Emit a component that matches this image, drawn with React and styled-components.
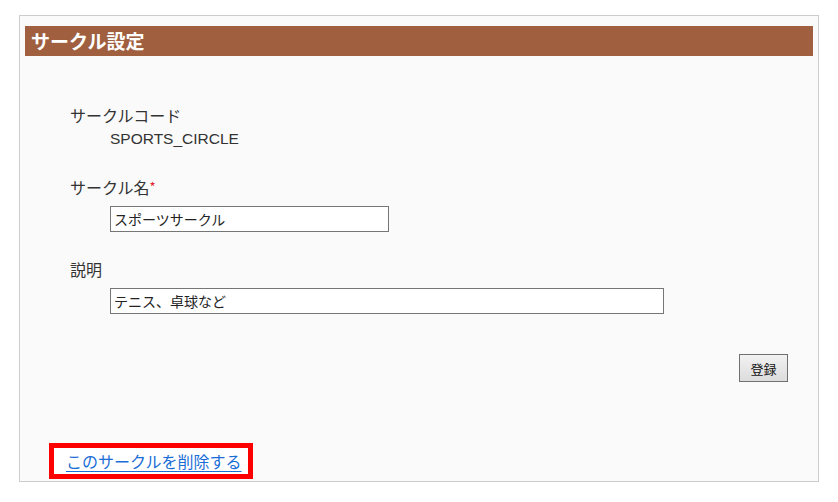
import styled, { createGlobalStyle } from 'styled-components'

const GlobalStyle = createGlobalStyle`
  body {
    margin: 0;
    background: #ffffff;
    font-family: "Noto Sans CJK JP", "Liberation Sans", sans-serif;
    color: #333333;
  }
`

const Page = styled.div`
  padding: 15px 20px 0 19px;
`

const Panel = styled.section`
  box-sizing: border-box;
  width: 800px;
  border: 1px solid #cccccc;
  background: #fafafa;
  padding: 10px 5px 2px 5px;
`

const Title = styled.h2`
  margin: 0;
  height: 30px;
  line-height: 30px;
  padding-left: 6px;
  background: #a0603f;
  color: #ffffff;
  font-size: 19px;
  font-weight: bold;
`

const Form = styled.div`
  padding: 47px 25px 0 45px;
  display: flex;
  flex-direction: column;
`

const Field = styled.div`
  display: flex;
  flex-direction: column;
  margin-bottom: ${(p) => p.gap ?? 24}px;
`

const Label = styled.div`
  font-size: 16px;
  line-height: 24px;
  height: 24px;
`

const Required = styled.span`
  color: #e8202a;
  font-size: 13px;
  line-height: 0;
  position: relative;
  top: -2px;
`

const Value = styled.div`
  margin-left: 40px;
  font-size: 15.5px;
  line-height: 24px;
  font-family: "Liberation Sans", "Noto Sans CJK JP", sans-serif;
`

const Input = styled.input`
  box-sizing: border-box;
  margin: 7px 0 0 40px;
  width: ${(p) => p.w}px;
  height: 26px;
  border: 1px solid #767676;
  background: #ffffff;
  padding: 0 3px;
  font-family: "Noto Sans CJK JP", sans-serif;
  font-size: 14px;
  color: #222222;
  outline: none;
`

const Actions = styled.div`
  display: flex;
  justify-content: flex-end;
  margin-top: 40px;
`

const SubmitButton = styled.button`
  width: 49px;
  height: 28px;
  border: 1px solid #707070;
  background: linear-gradient(#f2f2f2, #dcdcdc);
  font-family: "Noto Sans CJK JP", sans-serif;
  font-size: 13px;
  color: #111111;
  padding: 0;
`

const DeleteBox = styled.div`
  width: fit-content;
  margin: 61px 0 0 24px;
  border: 5px solid #ff0000;
  background: #ffffff;
  padding: 2px 6px 2px 12px;
  height: 22px;
  display: flex;
  align-items: center;
`

const DeleteLink = styled.a`
  color: #1a6dd6;
  font-size: 16px;
  line-height: 22px;
  text-decoration: underline;
  text-underline-offset: 3px;
`

export default function App() {
  return (
    <Page>
      <GlobalStyle />
      <Panel>
        <Title>サークル設定</Title>
        <Form>
          <Field>
            <Label>サークルコード</Label>
            <Value>SPORTS_CIRCLE</Value>
          </Field>
          <Field gap={25}>
            <Label>
              サークル名<Required>*</Required>
            </Label>
            <Input w={279} defaultValue="スポーツサークル" />
          </Field>
          <Field gap={0}>
            <Label>説明</Label>
            <Input w={554} defaultValue="テニス、卓球など" />
          </Field>
          <Actions>
            <SubmitButton>登録</SubmitButton>
          </Actions>
        </Form>
        <DeleteBox>
          <DeleteLink href="#">このサークルを削除する</DeleteLink>
        </DeleteBox>
      </Panel>
    </Page>
  )
}
